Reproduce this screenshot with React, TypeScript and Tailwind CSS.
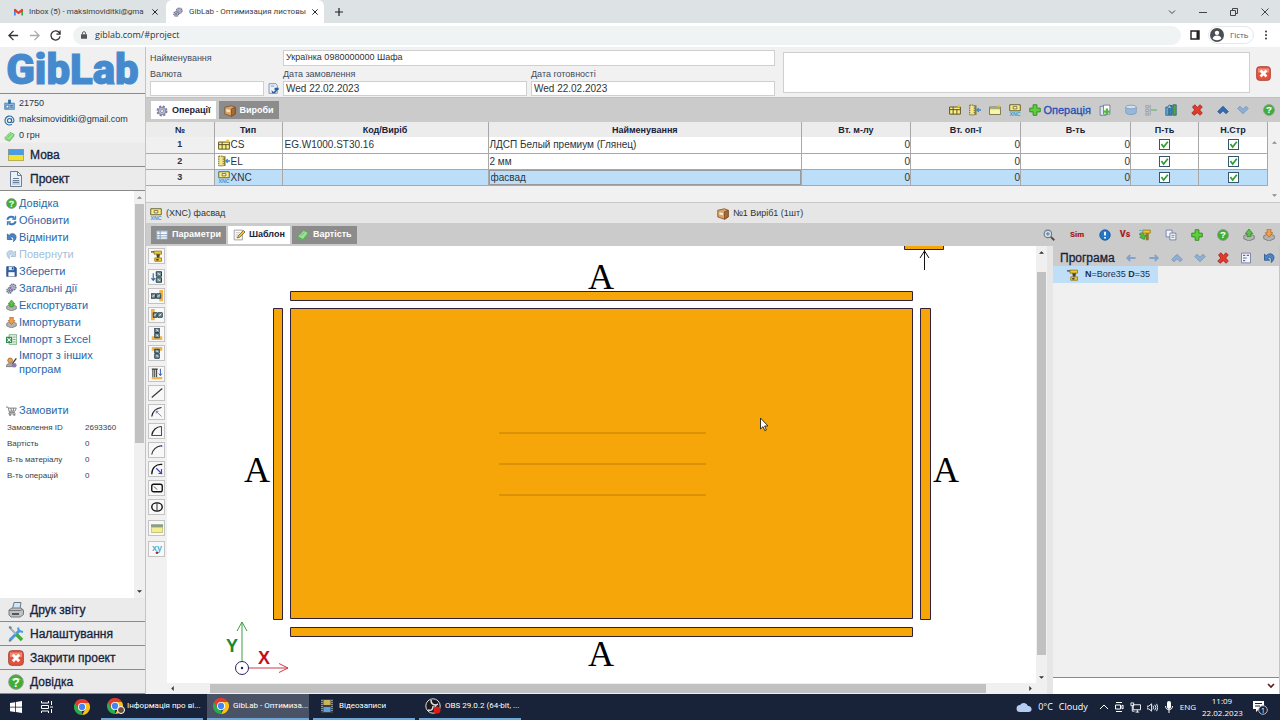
import type { ReactNode } from 'react';

type IconName = keyof typeof ICONS;

// All glyphs are drawn on a 16x16 grid
const ICONS = {
  idCard: (
    <g>
      <path d="M1 6h14v9H1z" fill="#8fb8dc" stroke="#2d6fa8" />
      <path d="M6 1h4v6H6z" fill="#2d6fa8" />
      <path d="M3 9h4v4H3zM9 9.500h4M9 12h4" fill="#fff" stroke="#2d5f90" />
    </g>
  ),
  at: (
    <g fill="none" stroke="#2b6aa6" strokeWidth="1.6">
      <circle cx="8" cy="8" r="3" />
      <path d="M11 5v4.500c0 2 3.500 2 3.500-1.500A6.500 6.500 0 1 0 11.500 13.500" />
    </g>
  ),
  money: (
    <g>
      <path d="M1 10 9 2l6 3-7 9z" fill="#9be095" stroke="#4fae4c" />
      <path d="m1 12 7 3 7-8M5 9l5-4" fill="none" stroke="#5cb858" />
    </g>
  ),
  flag: (
    <g>
      <path d="M0 2h16v6H0z" fill="#4d9be0" />
      <path d="M0 8h16v6H0z" fill="#f5e22c" />
      <path d="M.5 2.500h15v11H.5z" fill="none" stroke="#9a9a70" strokeWidth=".7" />
    </g>
  ),
  file: (
    <g stroke="#6d7f96">
      <path d="M2.500.5h7l4 4v11h-11z" fill="#e9f0f8" />
      <path d="M4 9h8v5H4z" fill="#c3d2e4" stroke="none" />
      <path d="M9.500.5v4h4M5 7.500h6M5 9.500h6M5 11.500h6" fill="none" />
    </g>
  ),
  help: (
    <g>
      <circle cx="8" cy="8" r="7.300" fill="#3fae37" stroke="#8b9a8b" />
      <path d="M3 6a5.500 4 0 0 1 10 0z" fill="#8fd884" />
      <text x="8" y="12.500" fontSize="12" fontWeight="700" textAnchor="middle" fill="#fff">
        ?
      </text>
    </g>
  ),
  refresh: (
    <g fill="none" stroke="#3a78bd" strokeWidth="2.800">
      <path d="M2 7c1-5 8-6 11-2M14 9c-1 5-8 6-11 2" />
      <path d="M14 1v5H9M2 15v-5h5" strokeWidth="1.500" fill="#7fb0e0" />
    </g>
  ),
  undo: (
    <path d="M2 3v8h7L6.500 8.500c2-3 6-1 4.500 5.500C17 9 15 2 9 2.500 7 2.500 5.500 3.500 4.500 5z" fill="#4b86c8" stroke="#1f4f8c" />
  ),
  redo: (
    <path d="M14 3v8H7l2.500-2.500c-2-3-6-1-4.500 5.500C-1 9 1 2 7 2.500c2 0 3.500 1 4.500 2.500z" fill="#c4d8ea" stroke="#93b3d1" />
  ),
  save: (
    <g>
      <path d="M1 1h12l2 2v12H1z" fill="#2f63a8" stroke="#1d3f74" />
      <path d="M4 1h7v5H4z" fill="#dfe8f2" />
      <path d="M3.500 9h9v6h-9z" fill="#fff" />
      <path d="M8.500 2h1.800v3H8.500z" fill="#1d3f74" />
    </g>
  ),
  gears: (
    <g fill="#b7b9cc" stroke="#66688c">
      <circle cx="10" cy="6" r="4.500" strokeDasharray="2 1" strokeWidth="1.800" />
      <circle cx="5" cy="11" r="3.800" strokeDasharray="2 1" strokeWidth="1.800" />
      <circle cx="10" cy="6" r="1.500" fill="#fff" />
      <circle cx="5" cy="11" r="1.200" fill="#62b255" />
    </g>
  ),
  exportUp: (
    <g>
      <path d="M1 9 8 6l7 3v4l-7 3-7-3z" fill="#b3b3b3" stroke="#6f6f6f" />
      <path d="M8 0l5 6h-2.500v4h-5V6H3z" fill="#5cc149" stroke="#2f8a25" />
    </g>
  ),
  importDown: (
    <g>
      <path d="M1 9 8 6l7 3v4l-7 3-7-3z" fill="#b3b3b3" stroke="#6f6f6f" />
      <path d="M5.500 0h5v5H13l-5 6-5-6h2.500z" fill="#f0a04c" stroke="#b8651a" />
    </g>
  ),
  excel: (
    <g>
      <path d="M4.500 1h11v14h-11z" fill="#e8f4e6" stroke="#4e9460" />
      <path d="M0 4h9v9H0z" fill="#2f8a4c" />
      <path d="m2 6 5 5M7 6l-5 5" stroke="#fff" strokeWidth="1.500" />
      <path d="M10 4.500h4M10 8h4M10 11.500h4" stroke="#4e9460" />
    </g>
  ),
  people: (
    <g>
      <circle cx="6" cy="5" r="3.500" fill="#f0a04c" stroke="#8c5a2a" />
      <path d="M0 14c0-6 11-6 11 0z" fill="#a9a9a9" stroke="#6b6b6b" />
      <path d="m9 10 6-8" stroke="#444" strokeWidth="2" />
      <circle cx="12" cy="12" r="3.400" fill="#8d79b4" />
    </g>
  ),
  cart: (
    <g fill="none" stroke="#6b6b6b" strokeWidth="1.200">
      <path d="M0 3h3l2 8h8M4 4.500h11L13 9H5M7 4.500 8 9M11 4.500 10.500 9M5 11l-1 2h10" />
      <circle cx="6" cy="14.500" r="1" />
      <circle cx="12" cy="14.500" r="1" />
    </g>
  ),
  printer: (
    <g stroke="#77797c">
      <path d="M4.500 7 6 .5h7L12 7z" fill="#cfe6fa" />
      <path d="M1 8 4 6h9l2.500 2v4.500L12 15H3l-2-2z" fill="#bfc2c5" />
      <path d="M1 8.500h11l3-1" fill="none" />
      <path d="M4 11h7v2H4z" fill="#55585b" stroke="none" />
    </g>
  ),
  tools: (
    <g fill="none">
      <path d="M2 14 12 4" stroke="#4a9ae0" strokeWidth="3" />
      <path d="M10 1.500 11 5l4 1" stroke="#4a9ae0" strokeWidth="2" />
      <path d="m2 2 6 6" stroke="#9fb0bf" strokeWidth="2" />
      <path d="m8.500 8.500 5.500 5.500" stroke="#44aa3d" strokeWidth="3.500" />
      <path d="m1 1 2.500 1M1 15l2-1" stroke="#6e7f8f" strokeWidth="2" />
    </g>
  ),
  closeBox: (
    <g>
      <rect x=".7" y=".7" width="14.600" height="14.600" rx="3" fill="#e4523c" stroke="#a94436" />
      <path d="M2 2.500h12V7H2z" fill="#f08a76" />
      <path d="m4.800 4.800 6.400 6.400M11.200 4.800l-6.400 6.400" stroke="#fff" strokeWidth="2.800" />
    </g>
  ),
  gear: (
    <g fill="#b9bad2" stroke="#7b7d9c">
      <circle cx="8" cy="8" r="5.800" strokeDasharray="2.600 2" strokeWidth="3" />
      <circle cx="8" cy="8" r="5" />
      <circle cx="8" cy="8" r="2" fill="#fff" />
    </g>
  ),
  box: (
    <g stroke="#7a4a22">
      <path d="m1 3 9-2 5 2v9l-5 3-9-3z" fill="#d9a466" />
      <path d="M10 5v10l5-3V3z" fill="#a86a35" />
      <path d="m3 5.500 5 1v3l-5-1z" fill="#f6ead6" stroke="none" />
    </g>
  ),
  params: (
    <g>
      <path d="M1 2.500h14v11H1z" fill="#fff" stroke="#8ba2bd" />
      <path d="M1 2.500h14v2H1z" fill="#b9cbe0" />
      <path d="M1 7.500h14M1 10.500h14M5.500 2.500v11" stroke="#6f88a6" />
    </g>
  ),
  pencil: (
    <g>
      <path d="M1.500 1.500h11v13h-11z" fill="#fafafa" stroke="#8a8a8a" />
      <path d="M3.500 5h6M3.500 8h4M3.500 11h3" stroke="#b0b0b0" />
      <path d="m6 12 1-3 7-7 2 2-7 7z" fill="#f2c230" stroke="#665a2a" />
    </g>
  ),
  sheet: (
    <g fill="#fbef84" stroke="#4f4a18" strokeWidth="1.200">
      <path d="M.8 4h14.400v9.500H.8z" />
      <path d="M5.500 4v9.500M1 7.500h14M10.500 7.500v6" fill="none" />
      <path d="M11 1h4v3h-4z" fill="#f1c232" stroke="none" />
    </g>
  ),
  edge: (
    <g strokeWidth="1.300">
      <path d="M1 1.500h6v13H1z" fill="#f6e58c" stroke="#6a611e" strokeDasharray="2 1" />
      <path d="M9 1.500v13" stroke="#8a7d2a" strokeWidth="2" />
      <path d="M16 8h-5M13 5.500 10.500 8l2.500 2.500" fill="none" stroke="#3f88c5" strokeWidth="1.800" />
    </g>
  ),
  panel: (
    <g>
      <path d="M.7 4h14.600v10H.7z" fill="#fbf6a3" stroke="#555b3d" />
      <path d="M1 4h14v3H1z" fill="#9db07d" />
      <path d="M11 1h3v3h-3z" fill="#f1c232" />
    </g>
  ),
  xnc: (
    <g>
      <path d="M1 1h14v8H1z" fill="#fbee86" stroke="#5c5420" strokeWidth="1.200" />
      <path d="M5.500 3.500h5v3h-5z" fill="#fff" stroke="#5c5420" />
      <text x="8" y="15.800" fontSize="7" fontWeight="700" textAnchor="middle" fill="#3c9bd2">
        XNC
      </text>
    </g>
  ),
  plus: (
    <path d="M5.500 1h5v4.500H15v5h-4.500V15h-5v-4.500H1v-5h4.500z" fill="#5fce3c" stroke="#2b8a1c" strokeWidth="1.200" />
  ),
  copyAdd: (
    <g>
      <path d="M1.500 3h8v12h-8z" fill="#dfe7f0" stroke="#57688a" />
      <path d="M6 1.500h8.500v12H6z" fill="#fff" stroke="#57688a" />
      <path d="M9 6h3v2.500h2.500v3H12V14H9v-2.500H6.500v-3H9z" fill="#4dbb36" />
    </g>
  ),
  database: (
    <g fill="#94b9dc" stroke="#7595b2">
      <path d="M1 4v7c0 4 14 4 14 0V4" />
      <ellipse cx="8" cy="4" rx="7" ry="2.500" fill="#d0e0ef" />
    </g>
  ),
  align: (
    <g stroke="#8c9aa6" fill="none">
      <path d="M1 2h4v3H1zM1 7h4v3H1zM1 12h4v3H1zM7 1v14" />
      <path d="M8 8h8" stroke="#7dba7d" strokeWidth="2" />
    </g>
  ),
  books: (
    <g stroke="#2f5d7a">
      <path d="M1 4h4v11H1z" fill="#5aa6d8" />
      <path d="M5.500 2h4v13h-4z" fill="#2d86be" />
      <path d="M10.500 1H15v14h-4.500z" fill="#4da64a" />
      <path d="m3 5 3-4 3 4" fill="#9bd1ee" />
    </g>
  ),
  cross: (
    <path d="m2 4 3-3 3.500 3.500L12 1l3 3-3.500 4L15 12l-3 3-3.500-3.500L4 15l-3-3 4-4z" fill="#e23b2e" stroke="#9b1c14" />
  ),
  chevronUp: <path d="m8 3 7 7-3 3-4-4-4 4-3-3z" fill="#2f6db5" stroke="#1f4f8c" />,
  chevronDown: <path d="m8 13 7-7-3-3-4 4-4-4-3 3z" fill="#8fb0d4" stroke="#6c90b8" />,
  chevronUpPale: <path d="m8 3 7 7-3 3-4-4-4 4-3-3z" fill="#8fb0d4" stroke="#6c90b8" />,
  arrowLeft: <path d="M14 8H3M7 4 3 8l4 4" fill="none" stroke="#7fa3cd" strokeWidth="2.400" />,
  arrowRight: <path d="M2 8h11M9 4l4 4-4 4" fill="none" stroke="#7fa3cd" strokeWidth="2.400" />,
  magnifier: (
    <g fill="none">
      <circle cx="6.500" cy="6.500" r="5" fill="#cfdbe6" stroke="#6a7c8e" strokeWidth="1.500" />
      <path d="M4 6.500h5M6.500 4v5" stroke="#4b6075" />
      <path d="m10.500 10.500 4.500 4.500" stroke="#5b4632" strokeWidth="2.500" />
    </g>
  ),
  info: (
    <g>
      <circle cx="8" cy="8" r="7" fill="#2277c9" stroke="#164f8c" />
      <path d="M8 3.500v5M8 10.500v2" stroke="#fff" strokeWidth="2.400" />
    </g>
  ),
  drill: (
    <g>
      <path d="M4 1.500h10v4H4z" fill="#f4c82e" stroke="#8a6d12" />
      <path d="M0 2.500h4" stroke="#333" strokeWidth="1.500" />
      <path d="M7 5.500h5l-1 5H8z" fill="#4a4328" />
      <path d="M5 10.500h9V15H5z" fill="#f4c82e" stroke="#8a6d12" />
      <path d="M7 13h3" stroke="#3c3c3c" strokeWidth="2" />
    </g>
  ),
  drillGreen: (
    <g>
      <path d="M5 1.500h10v4H5z" fill="#f4c82e" stroke="#8a6d12" />
      <path d="M9 5.500h4V15H9z" fill="#8c7a2b" />
      <path d="M1 6c3-2 6 0 6 3l2-1-2 6-6-3 2-1c0-2-1-2-2-2z" fill="#53bb3e" stroke="#2f8a25" />
      <path d="M0 2h5" stroke="#6fb2e0" strokeWidth="1.500" />
    </g>
  ),
  copy: (
    <g fill="#f4f6fb" stroke="#5f6d9a">
      <path d="M1.500 1.500h8v9h-8z" />
      <path d="M6.500 5.500h8v9h-8z" />
      <path d="M8.500 8.500h4M8.500 11h4" />
    </g>
  ),
  list: (
    <g fill="#f4f6fb" stroke="#5f6d9a">
      <path d="M2 1.500h12v13H2z" />
      <path d="M4 4.500h3M4 8h5M4 11.500h3M9 4.500h3" strokeWidth="1.500" />
    </g>
  ),
  calendar: (
    <g>
      <path d="M1.500 1h10l2 3v11h-12z" fill="#eef3fa" stroke="#54709a" />
      <path d="M4 4.500h5" stroke="#54709a" />
      <path d="m5 10 3 3 3-3h-1.500V7h6v3H14l-4 5H6z" fill="#2d5fa5" />
    </g>
  ),
  // Drilling and milling tools of the template toolbar
  boreFace: (
    <g>
      <path d="M7 1h7v6H7zM7 9h7v6H7z" fill="#7f9aa0" stroke="#223c48" strokeWidth="1.300" />
      <path d="m9 3 3 2M9 11l3 2" stroke="#fff" />
      <path d="M3 3v9M.5 9.500 3 12.500l2.500-3" fill="none" stroke="#2a6cae" strokeWidth="1.500" />
    </g>
  ),
  boreRight: (
    <g>
      <path d="M11 0h5v15h-5z" fill="#f0b44a" />
      <path d="M0 5h6v6H0zM7 5h6v6H7z" fill="#7f9aa0" stroke="#223c48" strokeWidth="1.300" />
      <path d="m2 9 3-3M9 9l3-3" stroke="#fff" />
    </g>
  ),
  boreLeft: (
    <g>
      <path d="M0 0h5v15H0z" fill="#f0b44a" />
      <path d="M3 5h5v6H3zM9 5h6v6H9z" fill="#7f9aa0" stroke="#223c48" strokeWidth="1.300" />
      <path d="m4 9 3-3M11 9l3-3" stroke="#fff" />
    </g>
  ),
  boreBottom: (
    <g>
      <path d="M1 11h14v5H1z" fill="#f0b44a" />
      <path d="M5 0h6v6H5zM5 7h6v6H5z" fill="#7f9aa0" stroke="#223c48" strokeWidth="1.300" />
      <path d="m7 2 3 2M7 9l3 2" stroke="#fff" />
    </g>
  ),
  boreTop: (
    <g>
      <path d="M1 0h14v5H1z" fill="#f0b44a" />
      <path d="M5 3h6v5H5zM5 9h6v6H5z" fill="#7f9aa0" stroke="#223c48" strokeWidth="1.300" />
      <path d="m7 5 3 2M7 11l3 2" stroke="#fff" />
    </g>
  ),
  groove: (
    <g>
      <path d="M1 12h14v3H1z" fill="#f0b44a" />
      <path d="M1 1.500h8M2.500 1.500V12M5 1.500V12M7.500 1.500V12" stroke="#3a3a3a" strokeWidth="1.400" />
      <path d="M12.500 1v9M10.500 7.500l2 2.500 2-2.500" fill="none" stroke="#2a55ae" strokeWidth="1.300" />
    </g>
  ),
  line: <path d="M1 14 15 2" stroke="#333" strokeWidth="1.500" />,
  arcRadius: (
    <g fill="none">
      <path d="M1 14C2 8 6 3 14 2" stroke="#222" strokeWidth="1.600" />
      <path d="m7 7 7 7M7 7h3M7 7v3" stroke="#5560b8" />
    </g>
  ),
  sector: (
    <g fill="none">
      <path d="M1 14C2 7 7 2 14 2" stroke="#222" strokeWidth="1.600" />
      <path d="M14 2v12H1" stroke="#3a45b0" strokeWidth="1.400" />
    </g>
  ),
  arc: (
    <g fill="none">
      <path d="M1 14C2 8 7 3 13 2.500" stroke="#333" strokeWidth="1.600" />
      <circle cx="14" cy="2.500" r="1.200" fill="#3a45b0" />
    </g>
  ),
  arcCenter: (
    <g fill="none">
      <path d="M1 15C1 7 6 1 15 2" stroke="#111" strokeWidth="1.700" />
      <path d="M7 7l6 6M14 8v7M10 14h5" stroke="#3a45b0" strokeWidth="1.500" />
    </g>
  ),
  rect: (
    <g fill="none" stroke="#111">
      <rect x="1" y="3" width="14" height="10" rx="2.500" strokeWidth="1.800" />
      <path d="m4 6 4 4" />
    </g>
  ),
  circle: (
    <g fill="none" stroke="#111">
      <ellipse cx="8" cy="8" rx="7" ry="5.500" strokeWidth="1.800" />
      <path d="M8 2v12" stroke="#445" strokeWidth="1.500" />
    </g>
  ),
  pocket: (
    <g>
      <path d="M0 3h16v4H0z" fill="#8a9d86" />
      <path d="M.5 7h15v7H.5z" fill="#f2ee93" stroke="#b9b65d" />
    </g>
  ),
  xy: (
    <g>
      <text x="8" y="10" fontSize="12" fontWeight="700" textAnchor="middle" fill="#4fb3d3">
        xy
      </text>
      <circle cx="8" cy="13" r="1.800" fill="#b0203a" />
    </g>
  ),
};

function Icon({ name, size = 'size-3' }: { name: IconName; size?: string }) {
  return (
    <svg viewBox="0 0 16 16" className={`${size} shrink-0`} aria-hidden="true">
      {ICONS[name]}
    </svg>
  );
}

function ChromeLogo({ size = 'size-4' }: { size?: string }) {
  return (
    <svg viewBox="0 0 24 24" className={`${size} shrink-0`} aria-hidden="true">
      <path d="M12 12v12A12 12 0 0 1 1.600 6z" fill="#2da94f" />
      <path d="M12 6h10.400A12 12 0 0 0 1.600 6l5.200 9z" fill="#e33b2e" />
      <path d="M17.200 15 12 24A12 12 0 0 0 22.400 6H12z" fill="#fbc116" />
      <circle cx="12" cy="12" r="6" fill="#fff" />
      <circle cx="12" cy="12" r="4.700" fill="#4285f4" />
    </svg>
  );
}

function CloseGlyph() {
  return (
    <svg viewBox="0 0 8 8" className="size-1.5 shrink-0" aria-hidden="true">
      <path d="m.5.5 7 7M7.500.5l-7 7" stroke="#222" strokeWidth="1.300" />
    </svg>
  );
}

function BrowserTabs() {
  return (
    <div className="flex h-[23px] shrink-0 items-stretch bg-[#dde2e5] font-[Roboto,sans-serif] text-[8px] text-[#3c4043]">
      <div className="flex w-[166px] items-center gap-1.5 pr-2 pl-3.5">
        <svg viewBox="0 0 16 12" className="h-2 w-[9px] shrink-0" aria-hidden="true">
          <path d="M0 1h3v11H0z" fill="#4285f4" />
          <path d="M13 1h3v11h-3z" fill="#34a853" />
          <path d="M0 1 2 0l6 5 6-5 2 1v3L8 10 0 4z" fill="#e5402f" />
        </svg>
        <span className="flex-1 whitespace-nowrap">Inbox (5) - maksimoviditki@gma</span>
        <button aria-label="Close tab">
          <CloseGlyph />
        </button>
      </div>
      <div className="flex w-[158px] items-center gap-1.5 rounded-t-md bg-white pr-2 pl-[7px]">
        <Icon name="gears" size="size-2.5" />
        <span className="flex-1 whitespace-nowrap">GibLab - Оптимизация листовы</span>
        <button aria-label="Close tab">
          <CloseGlyph />
        </button>
      </div>
      <button aria-label="New tab" className="flex w-[30px] items-center justify-center">
        <svg viewBox="0 0 8 8" className="size-2">
          <path d="M4 0v8M0 4h8" stroke="#222" strokeWidth="1.200" />
        </svg>
      </button>
      <div className="ml-auto flex items-center gap-[23px] pr-[11px]">
        {[
          { label: 'Search tabs', d: 'm1 2.500 3 3 3-3' },
          { label: 'Minimize', d: 'M0 4.500h8' },
          { label: 'Restore', d: 'M.5 2.500h5v5h-5zM2.500 2V.5h5v5H6' },
          { label: 'Close', d: 'm.5.5 7 7M7.500.5l-7 7' },
        ].map((b) => (
          <button key={b.label} aria-label={b.label}>
            <svg viewBox="0 0 8 8" className="size-2">
              <path d={b.d} fill="none" stroke="#333" strokeWidth=".9" />
            </svg>
          </button>
        ))}
      </div>
    </div>
  );
}

function AddressBar() {
  return (
    <div className="flex h-6 shrink-0 items-center bg-white pr-3 pl-2 font-['Open_Sans',sans-serif]">
      <div className="flex w-[65px] items-center gap-2.5">
        {[
          { label: 'Back', d: 'M11 6H1M6 1 1 6l5 5', color: '#333' },
          { label: 'Forward', d: 'M1 6h10M6 1l5 5-5 5', color: '#aaa' },
          { label: 'Reload', d: 'M10.500 3.500A5 5 0 1 0 11 7M11 .5v4H7', color: '#333' },
        ].map((b) => (
          <button key={b.label} aria-label={b.label}>
            <svg viewBox="0 0 12 12" className="size-[11px]">
              <path d={b.d} fill="none" stroke={b.color} strokeWidth="1.400" />
            </svg>
          </button>
        ))}
      </div>
      <div className="flex h-[19px] flex-1 items-center gap-2 rounded-full bg-[#f0f3f4] px-2">
        <svg viewBox="0 0 8 10" className="h-2 w-1.5 shrink-0" aria-hidden="true">
          <path d="M0 4h8v6H0z" fill="#555" />
          <path d="M2 4V2.500a2 2 0 0 1 4 0V4" fill="none" stroke="#555" strokeWidth="1.200" />
        </svg>
        <input
          aria-label="Address"
          defaultValue="giblab.com/#project"
          className="w-full bg-transparent text-[9px] text-[#333] outline-none"
        />
      </div>
      <button aria-label="Side panel" className="ml-[9px]">
        <svg viewBox="0 0 10 10" className="size-2.5">
          <path d="M1 1h8v8H1z" fill="none" stroke="#222" strokeWidth="1.400" />
          <path d="M6.500 1H9v8H6.500z" fill="#222" />
        </svg>
      </button>
      <button className="ml-2 flex h-[18px] w-[46px] items-center gap-1.5 rounded-full border border-gray-200 pl-px text-[8px] text-gray-600">
        <svg viewBox="0 0 16 16" className="size-3.5">
          <circle cx="8" cy="8" r="8" fill="#4b4f54" />
          <circle cx="8" cy="5.500" r="2.500" fill="#fff" />
          <path d="M3 12c1-4.500 9-4.500 10 0-2 2.500-8 2.500-10 0z" fill="#fff" />
        </svg>
        Гість
      </button>
      <button aria-label="Menu" className="ml-2.5">
        <svg viewBox="0 0 4 10" className="h-2.5 w-1">
          <circle cx="2" cy="1.500" r="1" fill="#333" />
          <circle cx="2" cy="5" r="1" fill="#333" />
          <circle cx="2" cy="8.500" r="1" fill="#333" />
        </svg>
      </button>
    </div>
  );
}

const MENU: { icon: IconName; label: string; disabled?: boolean }[] = [
  { icon: 'help', label: 'Довідка' },
  { icon: 'refresh', label: 'Обновити' },
  { icon: 'undo', label: 'Відмінити' },
  { icon: 'redo', label: 'Повернути', disabled: true },
  { icon: 'save', label: 'Зберегти' },
  { icon: 'gears', label: 'Загальні дії' },
  { icon: 'exportUp', label: 'Експортувати' },
  { icon: 'importDown', label: 'Імпортувати' },
  { icon: 'excel', label: 'Імпорт з Excel' },
];

const ORDER_INFO = [
  ['Замовлення ID', '2693360'],
  ['Вартість', '0'],
  ['В-ть матеріалу', '0'],
  ['В-ть операцій', '0'],
];

function SectionButton({ icon, label }: { icon: IconName; label: string }) {
  return (
    <button className="flex h-6 w-full shrink-0 items-center gap-1.5 border-b border-[#8a8a8a] bg-[#ebebeb] pl-2 text-left text-[12px] text-[#16233c] [-webkit-text-stroke:0.3px]">
      <Icon name={icon} size="size-4" />
      {label}
    </button>
  );
}

function ScrollArrow({ dir, dark }: { dir: 'up' | 'down' | 'left' | 'right'; dark?: boolean }) {
  const d = { up: 'M0 6l4-4 4 4z', down: 'M0 2l4 4 4-4z', left: 'M6 0 2 4l4 4z', right: 'M2 0l4 4-4 4z' }[dir];
  return (
    <svg viewBox="0 0 8 8" className="size-[5px] shrink-0" aria-hidden="true">
      <path d={d} fill={dark ? '#333' : '#8a8a8a'} />
    </svg>
  );
}

function Sidebar() {
  return (
    <aside className="flex w-[146px] shrink-0 flex-col border-r border-[#c4c4c4] bg-[#f0f0f0]">
      <div className="flex h-[47px] shrink-0 items-center justify-center border-b border-[#8a8a8a]">
        <h1 className="font-[Roboto,sans-serif] text-[42px] leading-[46px] font-black text-[#458ace] [-webkit-text-stroke:1px_#458ace]">
          GibLab
        </h1>
      </div>
      <ul className="h-[49px] shrink-0 pt-0.5 pl-1 text-[9px] text-[#22384e]">
        {(
          [
            ['idCard', '21750'],
            ['at', 'maksimoviditki@gmail.com'],
            ['money', '0 грн'],
          ] as [IconName, string][]
        ).map(([icon, text]) => (
          <li key={icon} className="flex h-4 items-center gap-1">
            <Icon name={icon} size="size-[11px]" />
            {text}
          </li>
        ))}
      </ul>
      <SectionButton icon="flag" label="Мова" />
      <SectionButton icon="file" label="Проект" />

      <div className="flex min-h-0 flex-1 bg-white">
        <div className="min-w-0 flex-1 pt-1 pl-1.5 text-[11px] text-[#2a68a8]">
          {MENU.map((m) => (
            <button
              key={m.label}
              disabled={m.disabled}
              className="flex h-[17px] items-center gap-0.5 whitespace-nowrap disabled:text-[#a3bfd9]"
            >
              <Icon name={m.icon} size="size-[11px]" />
              {m.label}
            </button>
          ))}
          <button className="flex items-center gap-0.5 text-left leading-[14px]">
            <Icon name="people" size="size-[11px]" />
            <span className="w-24">Імпорт з інших програм</span>
          </button>
          <button className="mt-[26px] flex h-[17px] items-center gap-0.5">
            <Icon name="cart" size="size-[11px]" />
            Замовити
          </button>
          <dl className="grid grid-cols-[78px_1fr] pt-px pl-px text-[8px] leading-4 text-[#333f4c]">
            {ORDER_INFO.map(([label, value]) => (
              <div key={label} className="contents">
                <dt className="whitespace-nowrap">{label}</dt>
                <dd>{value}</dd>
              </div>
            ))}
          </dl>
        </div>
        <div className="flex w-[11px] flex-col items-center justify-between bg-[#f0f0f0] py-1">
          <ScrollArrow dir="up" />
          <div className="mt-1 mb-auto h-[60%] w-[9px] bg-[#c1c1c1]" />
          <ScrollArrow dir="down" dark />
        </div>
      </div>

      <SectionButton icon="printer" label="Друк звіту" />
      <SectionButton icon="tools" label="Налаштування" />
      <SectionButton icon="closeBox" label="Закрити проект" />
      <SectionButton icon="help" label="Довідка" />
    </aside>
  );
}

const FIELD = 'block w-full border border-[#cfcfcf] bg-white px-0.5 text-[#333] outline-none';

function OrderForm() {
  return (
    <form className="flex h-[51px] shrink-0 gap-2 border-b border-[#c0c0c0] bg-[#f1f1f1] pt-[3px] pl-1 text-[9px] text-[#3d4c60]">
      <div className="grid min-w-0 flex-[625] grid-cols-[129px_1fr_1fr] grid-rows-[16px_15px_15px] gap-x-1">
        <label htmlFor="name" className="leading-4">
          Найменування
        </label>
        <input id="name" defaultValue="Українка 0980000000 Шафа" className={`${FIELD} col-span-2`} />
        <label htmlFor="currency" className="leading-4">
          Валюта
        </label>
        <label htmlFor="ordered" className="leading-4">
          Дата замовлення
        </label>
        <label htmlFor="ready" className="leading-4">
          Дата готовності
        </label>
        <div className="flex items-center gap-1">
          <input id="currency" className={`${FIELD} h-full min-w-0 flex-1`} />
          <button type="button" aria-label="Вибрати">
            <Icon name="calendar" size="size-[11px]" />
          </button>
        </div>
        <input id="ordered" defaultValue="Wed 22.02.2023" className={`${FIELD} text-[10px]`} />
        <input id="ready" defaultValue="Wed 22.02.2023" className={`${FIELD} text-[10px]`} />
      </div>
      <div className="flex min-w-0 flex-[497]">
        <textarea aria-label="Примітка" className="mt-0.5 h-[41px] min-w-0 flex-1 resize-none border border-[#cfcfcf] bg-white" />
        <button type="button" aria-label="Очистити" className="flex w-[27px] items-center justify-center">
          <Icon name="closeBox" size="size-[15px]" />
        </button>
        <div className="w-[3px]" />
      </div>
    </form>
  );
}

function Tab({ icon, label, active }: { icon: IconName; label: string; active?: boolean }) {
  return (
    <button
      className={`flex h-[18px] items-center gap-1 px-[5px] pt-px text-[9px] font-bold ${
        active ? 'bg-white text-[#16233c]' : 'bg-[#8c8c8c] text-white'
      }`}
    >
      <Icon name={icon} />
      {label}
    </button>
  );
}

function IconGroup({ icons }: { icons: IconName[] }) {
  return (
    <div className="flex items-center gap-2">
      {icons.map((icon) => (
        <button key={icon} aria-label={icon}>
          <Icon name={icon} />
        </button>
      ))}
    </div>
  );
}

function OperationsBar() {
  return (
    <div className="flex h-6 shrink-0 items-center gap-[3px] bg-[#cbcbcb] px-[5px]">
      <Tab icon="gear" label="Операції" active />
      <Tab icon="box" label="Вироби" />
      <div className="ml-auto flex items-center gap-3.5">
        <div className="flex items-center gap-2">
          <IconGroup icons={['sheet', 'edge', 'panel', 'xnc']} />
          <button className="flex items-center gap-0.5 text-[11px] leading-4 text-[#1f4fb8] [-webkit-text-stroke:0.3px]">
            <Icon name="plus" />
            Операція
          </button>
          <IconGroup icons={['copyAdd']} />
        </div>
        <IconGroup icons={['database', 'align', 'books']} />
        <IconGroup icons={['cross']} />
        <IconGroup icons={['chevronUp', 'chevronDown']} />
        <IconGroup icons={['help']} />
      </div>
    </div>
  );
}

const OPERATIONS: { icon: IconName; type: string; code: string; name: string }[] = [
  { icon: 'sheet', type: 'CS', code: 'EG.W1000.ST30.16', name: 'ЛДСП Белый премиум (Глянец)' },
  { icon: 'edge', type: 'EL', code: '', name: '2 мм' },
  { icon: 'xnc', type: 'XNC', code: '', name: 'фасвад' },
];

function Tick({ label }: { label: string }) {
  return (
    <span className="relative mx-auto block size-[11px]">
      <input
        type="checkbox"
        defaultChecked
        aria-label={label}
        className="peer block size-full appearance-none border border-[#35566e] bg-white"
      />
      <svg
        viewBox="0 0 10 10"
        className="pointer-events-none absolute inset-0 hidden size-full peer-checked:block"
        aria-hidden="true"
      >
        <path d="m2.200 4.500 2 2.800L8 2.500" fill="none" stroke="#2f9e2f" strokeWidth="1.500" />
      </svg>
    </span>
  );
}

function OperationsTable() {
  return (
    <div className="flex h-[81px] shrink-0 border-b border-[#c8c8c8] bg-[#f1f1f1]">
      <div className="min-w-0 flex-1">
        <table className="w-full table-fixed border-collapse text-[10px] text-[#2b3340]">
          <colgroup>
            <col className="w-[68px]" />
            <col className="w-[68px]" />
            <col className="w-[206px]" />
            <col />
            <col className="w-[109px]" />
            <col className="w-[110px]" />
            <col className="w-[110px]" />
            <col className="w-[68px]" />
            <col className="w-[69px]" />
          </colgroup>
          <thead>
            <tr className="h-[15px] bg-[#ececec] text-[#16233c]">
              {['№', 'Тип', 'Код/Виріб', 'Найменування', 'Вт. м-лу', 'Вт. оп-ї', 'В-ть', 'П-ть', 'Н.Стр'].map((h) => (
                <th key={h} className="border-r border-[#a8a8a8] p-0 text-[9px] leading-[14px] font-bold">
                  {h}
                </th>
              ))}
            </tr>
          </thead>
          <tbody>
            {OPERATIONS.map((op, i) => {
              const selected = i === 2;
              return (
                <tr
                  key={op.type}
                  className={`h-4 [&>td]:border-r [&>td]:border-b [&>td]:border-[#a8a8a8] [&>td]:p-0 [&>td]:leading-[15px] ${
                    selected ? 'bg-[#bcdef8]' : 'bg-white'
                  }`}
                >
                  <td className="bg-[#f0f0f0] text-center text-[9px] font-bold">{i + 1}</td>
                  <td>
                    <span className="flex items-center gap-px pl-[3px]">
                      <Icon name={op.icon} />
                      {op.type}
                    </span>
                  </td>
                  <td>
                    <span className="pl-0.5">{op.code}</span>
                  </td>
                  <td>
                    {selected ? (
                      <input
                        aria-label="Найменування"
                        defaultValue={op.name}
                        className="block h-[15px] w-full border border-[#9a9a9a] bg-transparent px-px outline-none"
                      />
                    ) : (
                      <span className="pl-px">{op.name}</span>
                    )}
                  </td>
                  <td className="text-right">0</td>
                  <td className="text-right">0</td>
                  <td className="text-right">0</td>
                  <td>
                    <Tick label="П-ть" />
                  </td>
                  <td>
                    <Tick label="Н.Стр" />
                  </td>
                </tr>
              );
            })}
          </tbody>
        </table>
      </div>
      <div className="flex w-3 flex-col items-center justify-between pt-[18px] pb-1">
        <ScrollArrow dir="up" />
        <ScrollArrow dir="down" />
      </div>
    </div>
  );
}

function TemplateBar() {
  return (
    <>
      <div className="grid h-5 shrink-0 grid-cols-2 items-center bg-[#e6e6e6] pt-0.5 text-[9px] text-[#333]">
        <div className="flex items-center gap-1 pl-1">
          <Icon name="xnc" />
          (XNC) фасвад
        </div>
        <div className="flex items-center gap-1 pl-1">
          <Icon name="box" />
          №1 Виріб1 (1шт)
        </div>
      </div>
      <div className="flex h-[23px] shrink-0 items-center gap-0.5 bg-[#cbcbcb] px-[5px]">
        <Tab icon="params" label="Параметри" />
        <Tab icon="pencil" label="Шаблон" active />
        <Tab icon="money" label="Вартість" />
        <div className="ml-auto flex items-center gap-3.5">
          <IconGroup icons={['magnifier']} />
          <button className="w-4 font-[Roboto,sans-serif] text-[8px] font-black text-[#a51f1f]">Sim</button>
          <div className="flex items-center gap-2">
            <IconGroup icons={['info']} />
            <button className="w-3 font-[Roboto,sans-serif] text-[9px] font-black text-[#a51f1f]">Vs</button>
            <IconGroup icons={['drillGreen']} />
          </div>
          <IconGroup icons={['copy']} />
          <IconGroup icons={['plus']} />
          <IconGroup icons={['help']} />
          <IconGroup icons={['exportUp', 'importDown']} />
        </div>
      </div>
    </>
  );
}

const TOOL_GROUPS: IconName[][] = [
  ['drill'],
  ['boreFace', 'boreRight', 'boreLeft', 'boreBottom', 'boreTop'],
  ['groove', 'line', 'arcRadius', 'sector', 'arc', 'arcCenter', 'rect', 'circle'],
  ['pocket'],
  ['xy'],
];

function ToolColumn() {
  return (
    <div className="flex w-[21px] shrink-0 flex-col items-center gap-[5px] bg-[#f1f1f1] pt-0.5">
      {TOOL_GROUPS.map((group) => (
        <div key={group[0]} className="flex flex-col gap-[3px]">
          {group.map((icon) => (
            <button
              key={icon}
              aria-label={icon}
              className="flex h-4 w-[17px] items-center justify-center border border-[#c3c3c3] bg-[#f8f8f8]"
            >
              <Icon name={icon} />
            </button>
          ))}
        </div>
      ))}
    </div>
  );
}

function Drawing() {
  const labels = [
    [601, 289],
    [257, 482],
    [946, 482],
    [601, 666],
  ];
  return (
    <svg viewBox="167 246 869 437" className="block min-h-0 w-full flex-1" role="img" aria-label="Шаблон деталі">
      <g fill="#f6a609" stroke="#33203a">
        <path d="M290.500 291.500h622v9h-622zM290.500 627.500h622v9h-622zM273.500 308.500h9v311h-9zM920.500 308.500h10v311h-10zM290.500 308.500h622v310h-622z" />
        <path d="M904.500 240.500h39v9h-39z" />
      </g>
      <path d="M499 433h207M499 464h207M499 495h207" stroke="#b87808" strokeWidth=".9" />
      <path d="M924.500 270v-20M920 258l4.500-7 4.500 7" fill="none" stroke="#111" />
      <g fontFamily="Liberation Serif, serif" fontSize="36" textAnchor="middle" fill="#000">
        {labels.map(([x, y]) => (
          <text key={`${x}-${y}`} x={x} y={y}>
            A
          </text>
        ))}
      </g>

      {/* Axes */}
      <g fill="none">
        <circle cx="242" cy="668" r="6.500" stroke="#22226e" />
        <circle cx="242" cy="668" r="1.200" fill="#22226e" />
        <path d="M242 661v-39M237 631l5-9 5 9" stroke="#3f9e49" />
        <path d="M249 668h39M279 663.500l9 4.500-9 4.500" stroke="#cf3a44" />
      </g>
      <g fontFamily="Liberation Sans, sans-serif" fontWeight="700" fontSize="18" textAnchor="middle">
        <text x="232" y="652" fill="#1c8a2c">
          Y
        </text>
        <text x="264" y="664" fill="#c4101c">
          X
        </text>
      </g>
      <path d="M760.500 418v11l2.500-2.300 1.800 4 1.600-.7-1.800-4h3.400z" fill="#fff" stroke="#222" strokeWidth=".9" />
    </svg>
  );
}

function Canvas() {
  return (
    <div className="flex min-w-0 flex-1 bg-white">
      <div className="flex min-w-0 flex-1 flex-col">
        <Drawing />
        <div className="flex h-[11px] shrink-0 items-center bg-[#f0f0f0] px-[3px]">
          <ScrollArrow dir="left" dark />
          <div className="mr-auto ml-[4%] h-[9px] w-[90%] bg-[#c1c1c1]" />
          <ScrollArrow dir="right" dark />
        </div>
      </div>
      <div className="flex w-[11px] flex-col items-center bg-[#f0f0f0] pt-1 pb-3.5">
        <ScrollArrow dir="up" dark />
        <div className="mt-[17px] mb-auto h-[89%] w-[9px] bg-[#c1c1c1]" />
        <ScrollArrow dir="down" dark />
      </div>
    </div>
  );
}

function ProgramPanel() {
  return (
    <section className="flex w-[227px] shrink-0 flex-col border-r border-[#c4c4c4] bg-[#f0f0f0]">
      <div className="flex h-5 shrink-0 items-center justify-between bg-[#cbcbcb] pt-1 pr-1 pl-[7px]">
        <h2 className="text-[12px] leading-4 text-[#16233c] [-webkit-text-stroke:0.3px]">Програма</h2>
        <div className="flex items-center gap-[11px]">
          {(
            ['arrowLeft', 'arrowRight', 'chevronUpPale', 'chevronDown', 'cross', 'list', 'undo'] as IconName[]
          ).map((icon) => (
            <button key={icon} aria-label={icon}>
              <Icon name={icon} />
            </button>
          ))}
        </div>
      </div>
      <button className="flex h-[17px] w-[105px] items-center gap-1.5 bg-[#bfdff8] pl-3.5 text-[9px] text-[#22304a]">
        <Icon name="drill" />
        <span className="whitespace-nowrap">
          <b>N</b>=Bore35 <b>D</b>=35
        </span>
      </button>
      <div className="relative mt-auto">
        <select
          aria-label="Команда"
          className="block h-[17px] w-full appearance-none border-t border-[#8a8a8a] bg-white outline-none"
        />
        <svg viewBox="0 0 8 6" className="pointer-events-none absolute top-1.5 right-1 h-1.5 w-2" aria-hidden="true">
          <path d="m1 1 3 3 3-3" fill="none" stroke="#5a1a1a" strokeWidth="1.600" />
        </svg>
      </div>
    </section>
  );
}

function TaskItem({ icon, label, active }: { icon: ReactNode; label: string; active?: boolean }) {
  return (
    <button
      className={`flex h-full w-[102px] items-center gap-1 border-b-2 border-[#6fa6d8] pl-1.5 whitespace-nowrap ${
        active ? 'bg-[#4a5365]' : ''
      }`}
    >
      {icon}
      {label}
    </button>
  );
}

function Taskbar() {
  return (
    <footer className="flex h-[26px] shrink-0 items-center bg-[#182238] font-['Open_Sans',sans-serif] text-[8px] text-white">
      <button aria-label="Пуск" className="flex w-[31px] justify-center">
        <svg viewBox="0 0 12 12" className="size-3">
          <path d="m0 2 5-.8v4.500H0zM5.800 1 12 0v5.700H5.800zM0 6.400h5V11l-5-.8zM5.800 6.400H12V12l-6.200-1z" fill="#fff" />
        </svg>
      </button>
      <button aria-label="Подання завдань" className="flex w-8 justify-center">
        <svg viewBox="0 0 12 12" className="size-3">
          <path d="M.5 0v2h7V0M.5 4.500h7v3h-7zM.5 12v-2h7v2M10.500 0v4M10.500 8v4M9 6h3" fill="none" stroke="#fff" />
        </svg>
      </button>
      <button aria-label="Chrome" className="flex w-[38px] justify-center">
        <ChromeLogo />
      </button>
      <div className="flex h-full gap-1 font-[Roboto,sans-serif]">
        <TaskItem
          icon={
            <span className="relative">
              <ChromeLogo />
              <span className="absolute -right-0.5 bottom-0 size-2 rounded-full border border-white bg-[#6b4a3a]" />
            </span>
          }
          label="Інформація про ві..."
        />
        <TaskItem icon={<ChromeLogo />} label="GibLab - Оптимиза..." active />
        <TaskItem
          icon={
            <svg viewBox="0 0 12 14" className="h-3.5 w-4 shrink-0" aria-hidden="true">
              <path d="M0 0h12v14H0z" fill="#3a3f46" />
              <path d="M2.500 1h7v5h-7z" fill="#c9b458" />
              <path d="M2.500 8h7v5h-7z" fill="#5aa0de" />
              <path d="M1 1v12M11 1v12" stroke="#ddd" strokeDasharray="1 1" />
            </svg>
          }
          label="Відеозаписи"
        />
        <TaskItem
          icon={
            <svg viewBox="0 0 16 16" className="size-4 shrink-0" aria-hidden="true">
              <circle cx="8" cy="8" r="7.200" fill="#1c1c1e" stroke="#ddd" />
              <path d="M6 2c0 4 2 5 5 5M3 12c4 1 5-1 5-4M13 6c-3 1-4 4-2 6" fill="none" stroke="#ddd" strokeWidth="1.500" />
              <circle cx="12" cy="12" r="3.500" fill="#e01818" />
            </svg>
          }
          label="OBS 29.0.2 (64-bit, ..."
        />
      </div>
      <div className="ml-auto flex items-center gap-1.5 pr-3">
        <svg viewBox="0 0 16 12" className="h-3 w-4" aria-hidden="true">
          <path d="M4 11a3.500 3.500 0 0 1 0-7 4.500 4.500 0 0 1 8 1 3 3 0 0 1 1 6z" fill="#b5cdf0" />
        </svg>
        <span className="text-[9px]">0°C</span>
        <span className="text-[9px]">Cloudy</span>
        <svg viewBox="0 0 8 8" className="ml-1.5 size-2" aria-hidden="true">
          <path d="m0 6 4-4 4 4" fill="none" stroke="#fff" />
        </svg>
        <svg viewBox="0 0 10 12" className="h-3 w-2.5" aria-hidden="true">
          <path d="M2 1.500h6M2 10.500h6M1.500 4h5v4h-5zM7 5.500 9 4v4L7 6.500" fill="none" stroke="#fff" />
        </svg>
        <svg viewBox="0 0 12 12" className="size-[11px]" aria-hidden="true">
          <path d="M3.500 3h8v5.500h-8zM1 1h3v3H1zM6 11h4M8 8.500V11M2.500 4v6H5" fill="none" stroke="#fff" />
        </svg>
        <svg viewBox="0 0 12 12" className="size-[11px]" aria-hidden="true">
          <path d="M0 4.500h2L5 2v8L2 7.500H0zM6.500 4q1.500 2 0 4M8.500 3q2.500 3 0 6M10.500 2q2.500 4 0 8" fill="none" stroke="#fff" />
        </svg>
        <svg viewBox="0 0 10 12" className="h-3 w-2.5" aria-hidden="true">
          <rect x="3" y="0" width="4" height="8" rx="2" fill="#fff" />
          <path d="M1.500 5c0 5 7 5 7 0M5 9v3" fill="none" stroke="#fff" />
        </svg>
        <span>ENG</span>
        <time className="w-10 text-center leading-3">
          11:09
          <br />
          22.02.2023
        </time>
        <button aria-label="Сповіщення" className="ml-1">
          <svg viewBox="0 0 16 16" className="size-4">
            <path d="M1 2h11v8H7l-3 3v-3H1z" fill="#fff" />
            <path d="M3 4.500h7M3 7h5" stroke="#182238" />
            <circle cx="11" cy="11" r="4.300" fill="#182238" stroke="#bbb" />
            <text x="11" y="13.500" fontSize="7" textAnchor="middle" fill="#fff">
              1
            </text>
          </svg>
        </button>
      </div>
    </footer>
  );
}

export default function App() {
  return (
    <div className="flex h-screen flex-col overflow-hidden bg-[#f0f0f0] font-['Liberation_Sans',Arial,sans-serif]">
      <BrowserTabs />
      <AddressBar />
      <div className="flex min-h-0 flex-1">
        <Sidebar />
        <main className="flex min-w-0 flex-1 flex-col">
          <OrderForm />
          <OperationsBar />
          <OperationsTable />
          <TemplateBar />
          <div className="flex min-h-0 flex-1 gap-1.5 bg-[#e6e6e6]">
            <div className="flex min-w-0 flex-1">
              <ToolColumn />
              <Canvas />
            </div>
            <ProgramPanel />
          </div>
        </main>
      </div>
      <Taskbar />
    </div>
  );
}
